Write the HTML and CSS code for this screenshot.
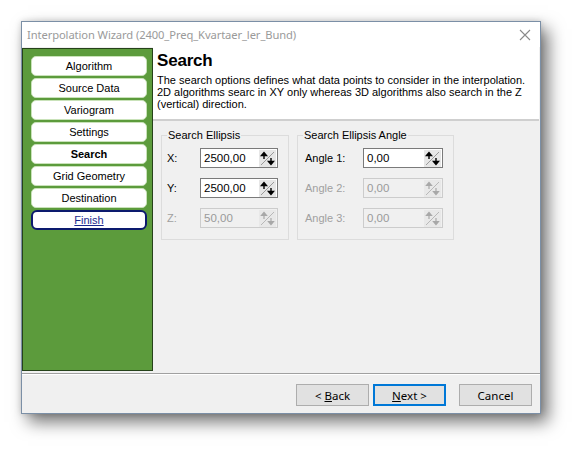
FILE: index.html
```html
<!DOCTYPE html>
<html>
<head>
<meta charset="utf-8">
<link rel="stylesheet" href="styles.css">
</head>
<body>
<div class="window">
  <div class="titlebar">
    <span class="title">Interpolation Wizard (2400_Preq_Kvartaer_ler_Bund)</span>
    <svg class="close" width="12" height="12" viewBox="0 0 12 12"><path d="M1 1L11 11M11 1L1 11" stroke="#8a8a8a" stroke-width="1.1" fill="none"/></svg>
  </div>
  <div class="main">
    <div class="nav">
      <div class="navbtn">Algorithm</div>
      <div class="navbtn">Source Data</div>
      <div class="navbtn">Variogram</div>
      <div class="navbtn">Settings</div>
      <div class="navbtn current">Search</div>
      <div class="navbtn">Grid Geometry</div>
      <div class="navbtn">Destination</div>
      <div class="navbtn finish"><span>Finish</span></div>
    </div>
    <div class="pane">
      <div class="header">
        <div class="htitle">Search</div>
        <div class="hdesc">The search options defines what data points to consider in the interpolation.<br>2D algorithms searc in XY only whereas 3D algorithms also search in the Z<br>(vertical) direction.</div>
      </div>
      <div class="content">
        <fieldset class="group g1">
          <legend>Search Ellipsis</legend>
          <div class="row"><span class="lbl">X:</span><div class="input"><span class="val">2500,00</span><span class="spin"><svg width="17" height="17" viewBox="0 0 17 17"><path d="M2 15L15 2" stroke="#9a9a9a" stroke-width="1"/><path d="M5 9V4M2.5 5.5L5 2.5L7.5 5.5Z" stroke="#000" fill="#000" stroke-width="1.4"/><path d="M12 8V13M9.5 11.5L12 14.5L14.5 11.5Z" stroke="#000" fill="#000" stroke-width="1.4"/></svg></span></div></div>
          <div class="row"><span class="lbl">Y:</span><div class="input"><span class="val">2500,00</span><span class="spin"><svg width="17" height="17" viewBox="0 0 17 17"><path d="M2 15L15 2" stroke="#9a9a9a" stroke-width="1"/><path d="M5 9V4M2.5 5.5L5 2.5L7.5 5.5Z" stroke="#000" fill="#000" stroke-width="1.4"/><path d="M12 8V13M9.5 11.5L12 14.5L14.5 11.5Z" stroke="#000" fill="#000" stroke-width="1.4"/></svg></span></div></div>
          <div class="row disabled"><span class="lbl">Z:</span><div class="input"><span class="val">50,00</span><span class="spin"><svg width="17" height="17" viewBox="0 0 17 17"><path d="M2 15L15 2" stroke="#b8b8b8" stroke-width="1"/><path d="M5 9V4M2.5 5.5L5 2.5L7.5 5.5Z" stroke="#a8a8a8" fill="#a8a8a8" stroke-width="1.2"/><path d="M12 8V13M9.5 11.5L12 14.5L14.5 11.5Z" stroke="#a8a8a8" fill="#a8a8a8" stroke-width="1.2"/></svg></span></div></div>
        </fieldset>
        <fieldset class="group g2">
          <legend>Search Ellipsis Angle</legend>
          <div class="row"><span class="lbl">Angle 1:</span><div class="input"><span class="val">0,00</span><span class="spin"><svg width="17" height="17" viewBox="0 0 17 17"><path d="M2 15L15 2" stroke="#9a9a9a" stroke-width="1"/><path d="M5 9V4M2.5 5.5L5 2.5L7.5 5.5Z" stroke="#000" fill="#000" stroke-width="1.4"/><path d="M12 8V13M9.5 11.5L12 14.5L14.5 11.5Z" stroke="#000" fill="#000" stroke-width="1.4"/></svg></span></div></div>
          <div class="row disabled"><span class="lbl">Angle 2:</span><div class="input"><span class="val">0,00</span><span class="spin"><svg width="17" height="17" viewBox="0 0 17 17"><path d="M2 15L15 2" stroke="#b8b8b8" stroke-width="1"/><path d="M5 9V4M2.5 5.5L5 2.5L7.5 5.5Z" stroke="#a8a8a8" fill="#a8a8a8" stroke-width="1.2"/><path d="M12 8V13M9.5 11.5L12 14.5L14.5 11.5Z" stroke="#a8a8a8" fill="#a8a8a8" stroke-width="1.2"/></svg></span></div></div>
          <div class="row disabled"><span class="lbl">Angle 3:</span><div class="input"><span class="val">0,00</span><span class="spin"><svg width="17" height="17" viewBox="0 0 17 17"><path d="M2 15L15 2" stroke="#b8b8b8" stroke-width="1"/><path d="M5 9V4M2.5 5.5L5 2.5L7.5 5.5Z" stroke="#a8a8a8" fill="#a8a8a8" stroke-width="1.2"/><path d="M12 8V13M9.5 11.5L12 14.5L14.5 11.5Z" stroke="#a8a8a8" fill="#a8a8a8" stroke-width="1.2"/></svg></span></div></div>
        </fieldset>
      </div>
    </div>
  </div>
  <div class="bottom">
    <div class="btn"><span>&lt;&nbsp;<u>B</u>ack</span></div>
    <div class="btn default"><span><u>N</u>ext &gt;</span></div>
    <div class="btn cancel"><span>Cancel</span></div>
  </div>
</div>
</body>
</html>
```
FILE: styles.css
```css
html, body {
  margin: 0;
  padding: 0;
  background: #ffffff;
}
body {
  padding: 21px 0 0 21px;
  height: 457px;
  box-sizing: border-box;
  font-family: "Liberation Sans", Arial, sans-serif;
  font-size: 11px;
  color: #000;
}
.window {
  width: 518px;
  height: 391px;
  border: 1px solid #7b8fa6;
  background: #f0f0f0;
  box-shadow: 7px 8px 16px rgba(0, 0, 0, 0.55), 0 0 6px rgba(0, 0, 0, 0.15);
  display: flex;
  flex-direction: column;
}
.titlebar {
  height: 25px;
  background: #ffffff;
  display: flex;
  align-items: center;
  justify-content: space-between;
  padding: 0 9px 0 5px;
  flex: none;
}
.title {
  font-family: "Noto Sans", sans-serif;
  font-size: 11.2px;
  color: #9a9a9a;
  letter-spacing: -0.1px;
}
.close {
  display: block;
}
.main {
  height: 326px;
  display: flex;
  flex: none;
}
.nav {
  width: 131px;
  height: 323px;
  margin-top: 1px;
  background: #5c9b3c;
  border: 1px solid #26421a;
  display: flex;
  flex-direction: column;
  gap: 2px;
  padding: 7px 0 0 8px;
  box-sizing: border-box;
  flex: none;
}
.navbtn {
  width: 116px;
  height: 20px;
  box-sizing: border-box;
  background: #ffffff;
  border: 1px solid #c9e2b9;
  border-radius: 5px;
  display: flex;
  align-items: center;
  justify-content: center;
  font-size: 11px;
}
.navbtn.current {
  font-weight: bold;
}
.navbtn.finish {
  border: 2px solid #0c1a6e;
  border-radius: 6px;
  color: #1a2a8e;
}
.navbtn.finish span {
  text-decoration: underline;
}
.pane {
  flex: 1;
  display: flex;
  flex-direction: column;
}
.header {
  height: 68px;
  background: #ffffff;
  border-bottom: 2px solid #cfcfcf;
  padding: 4px 0 0 4px;
  box-sizing: content-box;
  margin-right: 1px;
}
.htitle {
  font-size: 17px;
  font-weight: bold;
  line-height: 20px;
  letter-spacing: -0.2px;
}
.hdesc {
  margin-top: 3px;
  line-height: 12px;
  font-size: 11px;
  letter-spacing: 0;
}
.content {
  display: flex;
  gap: 8px;
  padding: 8px 0 0 8px;
}
.group {
  margin: 0;
  border: 1px solid #dcdcdc;
  padding: 6px 10px 10px 0;
  min-width: 0;
  box-sizing: border-box;
  height: 111px;
  display: flex;
  flex-direction: column;
  gap: 10px;
}
.group legend {
  padding: 0 1px;
  margin-left: 5px;
  font-size: 11px;
  line-height: 13px;
}
.g1 { width: 128px; }
.g2 { width: 157px; }
.row {
  display: flex;
  align-items: center;
  height: 20px;
}
.lbl {
  width: 38px;
  padding-left: 5px;
  box-sizing: border-box;
  flex: none;
}
.g2 .lbl {
  width: 65px;
  padding-left: 7px;
}
.input {
  width: 79px;
  height: 20px;
  box-sizing: border-box;
  border: 1px solid #7a7a7a;
  background: #ffffff;
  display: flex;
  align-items: center;
  justify-content: space-between;
  padding: 0 0 0 3px;
  font-size: 11.5px;
}
.g2 .input { width: 80px; }
.spin {
  width: 17px;
  height: 17px;
  margin-right: 1px;
  background: #e6e6e6;
  border: 0;
  display: block;
}
.spin svg { display: block; }
.row.disabled .lbl { color: #a0a0a0; }
.row.disabled .input {
  border-color: #cccccc;
  background: #f0f0f0;
  color: #9a9a9a;
}
.row.disabled .spin { background: #e8e8e8; }
.bottom {
  flex: 1;
  border-top: 1px solid #a0a0a0;
  box-shadow: inset 0 1px 0 #ffffff;
  display: flex;
  align-items: flex-start;
  padding: 10px 8px 0 0;
  justify-content: flex-end;
  gap: 4px;
}
.btn {
  width: 73px;
  height: 22px;
  box-sizing: border-box;
  background: #e1e1e1;
  border: 1px solid #adadad;
  display: flex;
  align-items: center;
  justify-content: center;
  font-family: "Noto Sans", sans-serif;
  font-size: 11.5px;
}
.btn.default {
  border: 2px solid #0078d7;
}
.btn.cancel {
  margin-left: 9px;
}
```
